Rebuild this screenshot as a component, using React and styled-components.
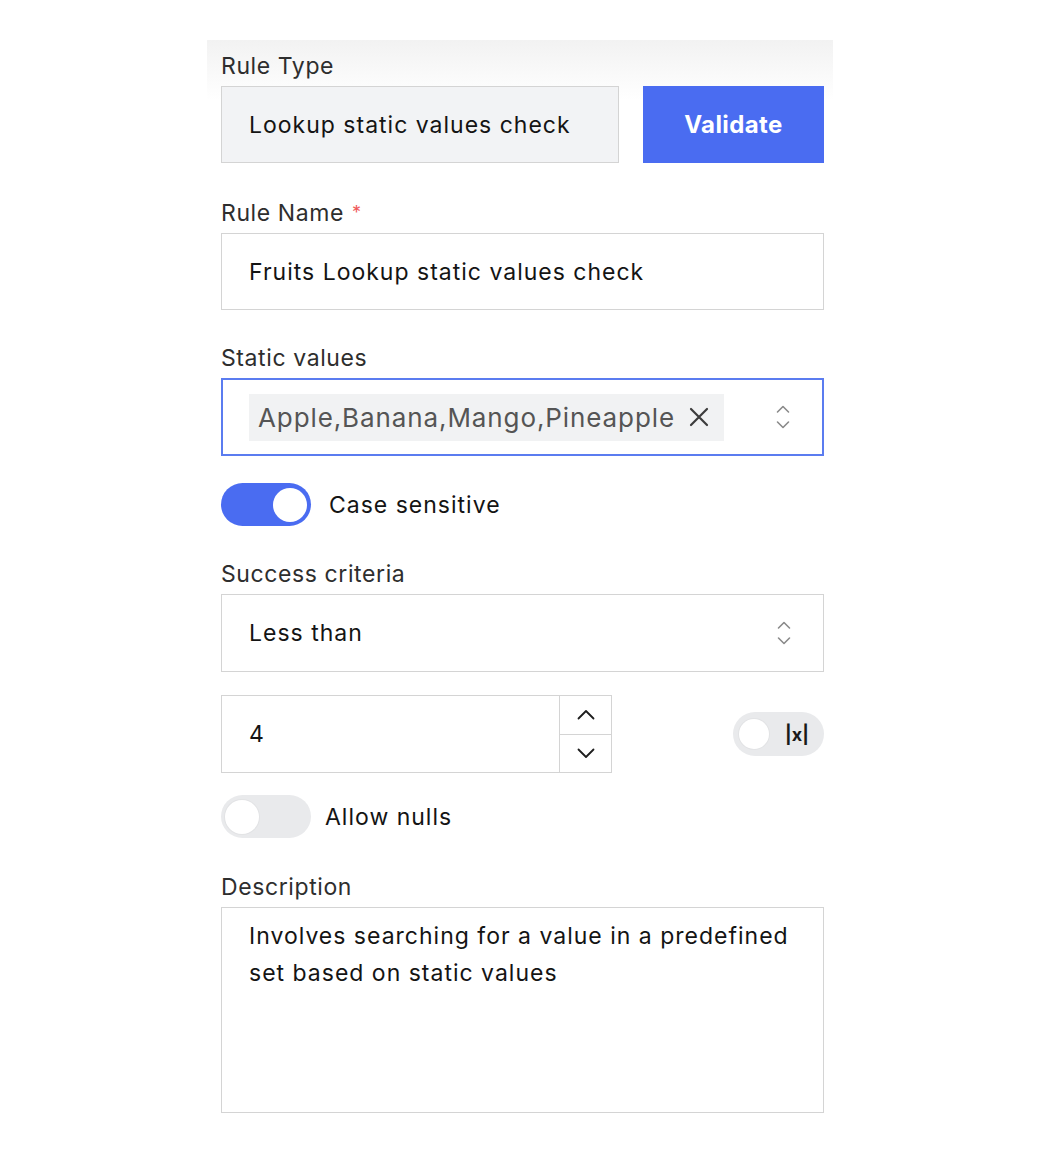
import React from 'react'
import styled, { createGlobalStyle } from 'styled-components'

const GlobalStyle = createGlobalStyle`
  body {
    margin: 0;
    background: #ffffff;
    font-family: Inter, "Open Sans", sans-serif;
    color: #1b1b1b;
  }
`;

// Styled components
const Page = styled.div`
  width: 1040px;
  height: 1160px;
  padding-top: 40px;
  box-sizing: border-box;
`;

const Panel = styled.div`
  margin-left: 207px;
  width: 626px;
  padding: 12px 9px 0 14px;
  box-sizing: border-box;
  background: linear-gradient(#f2f2f2 0px, #ffffff 60px);
  display: flex;
  flex-direction: column;
`;

const Field = styled.div`
  display: flex;
  flex-direction: column;
  margin-top: ${props => props.$mt || 0}px;
`;

const Label = styled.div`
  font-size: 23px;
  line-height: 28px;
  margin-bottom: 6px;
  color: #2e2e2e;
  letter-spacing: 0.6px;

  & > span {
    color: #f05a5a;
    font-size: 18px;
    vertical-align: top;
    margin-left: 8px;
  }
`;

const Row = styled.div`
  display: flex;
  align-items: center;
  justify-content: space-between;
  margin-top: ${props => props.$mt || 0}px;
`;

const Box = styled.div`
  height: ${props => props.$h || 77}px;
  box-sizing: border-box;
  border: ${props => props.$focus ? '2px solid #5b7cf0' : '1.5px solid #d4d4d4'};
  background: ${props => props.$muted ? '#f2f3f5' : '#ffffff'};
  display: flex;
  align-items: center;
  padding: 0 32px 0 27px;
  font-size: 23px;
  color: #141414;
  width: ${props => props.$width ? `${props.$width}px` : '100%'};
  letter-spacing: 1px;
`;

const BoxText = styled.div`
  flex: 1;
`;

const ValidateButton = styled.button`
  width: 181px;
  height: 77px;
  border: none;
  background: #4a6cf1;
  color: #ffffff;
  font-family: Inter, sans-serif;
  font-size: 24px;
  font-weight: 700;
  letter-spacing: 0.4px;
  padding: 0;
`;

const Chip = styled.div`
  height: 47px;
  display: flex;
  align-items: center;
  gap: 14px;
  padding: 0 15px 0 9px;
  margin-left: -1px;
  background: #f1f2f3;
  color: #555555;
  font-size: 26px;
  letter-spacing: 0.9px;
`;

const Spacer = styled.div`
  flex: 1;
`;

const ToggleRow = styled.div`
  display: flex;
  align-items: center;
  gap: ${props => props.$gap || 18}px;
  margin-top: ${props => props.$mt || 0}px;
  font-size: 23px;
  letter-spacing: 1px;
  color: #141414;
`;

const Track = styled.div`
  width: ${props => props.$w || 90}px;
  height: ${props => props.$h || 43}px;
  border-radius: 999px;
  background: ${props => props.$on ? '#4a6cf1' : '#e9eaec'};
  display: flex;
  align-items: center;
  justify-content: ${props => props.$on ? 'flex-end' : 'flex-start'};
  padding: 0 4px;
  box-sizing: border-box;
  flex-shrink: 0;
`;

const Knob = styled.div`
  width: ${props => props.$size || 34}px;
  height: ${props => props.$size || 34}px;
  border-radius: 50%;
  background: #ffffff;
  box-shadow: ${props => props.$on ? 'none' : '0 0 0 1px #e2e3e5'};
`;

const AbsToggle = styled(Track)`
  padding: 0 6px;
  gap: 16px;
`;

const AbsLabel = styled.span`
  font-size: 18px;
  font-weight: 700;
  color: #1a1a1a;
`;

const NumberBox = styled.div`
  width: 391px;
  height: 78px;
  box-sizing: border-box;
  border: 1.5px solid #d4d4d4;
  display: flex;
`;

const NumberValue = styled.div`
  flex: 1;
  display: flex;
  align-items: center;
  padding-left: 27px;
  font-size: 23px;
  color: #141414;
`;

const Stepper = styled.div`
  width: 51px;
  border-left: 1.5px solid #d4d4d4;
  display: flex;
  flex-direction: column;
`;

const StepButton = styled.div`
  flex: 1;
  display: flex;
  align-items: center;
  justify-content: center;
  & + & {
    border-top: 1.5px solid #d4d4d4;
  }
`;

const TextArea = styled.div`
  height: 206px;
  box-sizing: border-box;
  border: 1.5px solid #d4d4d4;
  padding: 10px 20px 0 27px;
  font-size: 23px;
  line-height: 37px;
  color: #141414;
  letter-spacing: 1px;
`;

// Icons
const UpDown = () => (
  <svg width="14" height="28" viewBox="0 0 14 28" fill="none" stroke="#8a8a8a" strokeWidth="1.6" strokeLinecap="round" strokeLinejoin="round">
    <path d="M1.5 9 L7 3.5 L12.5 9" />
    <path d="M1.5 19 L7 24.5 L12.5 19" />
  </svg>
);

const CloseIcon = () => (
  <svg width="20" height="20" viewBox="0 0 20 20" fill="none" stroke="#3c3c3c" strokeWidth="2.2" strokeLinecap="round">
    <path d="M2 2 L18 18 M18 2 L2 18" />
  </svg>
);

const Chevron = ({ up }) => (
  <svg width="18" height="11" viewBox="0 0 18 11" fill="none" stroke="#1e1e1e" strokeWidth="1.8" strokeLinecap="round" strokeLinejoin="round">
    <path d={up ? 'M1.5 9.5 L9 2 L16.5 9.5' : 'M1.5 1.5 L9 9 L16.5 1.5'} />
  </svg>
);

// Main component
const App = () => {
  return (
    <Page>
      <GlobalStyle />
      <Panel>
        <Field>
          <Label>Rule Type</Label>
          <Row>
            <Box $muted $width={398}>
              <BoxText>Lookup static values check</BoxText>
            </Box>
            <ValidateButton>Validate</ValidateButton>
          </Row>
        </Field>

        <Field $mt={36}>
          <Label>Rule Name<span>*</span></Label>
          <Box>
            <BoxText>Fruits Lookup static values check</BoxText>
          </Box>
        </Field>

        <Field $mt={34}>
          <Label>Static values</Label>
          <Box $focus $h={78}>
            <Chip>
              Apple,Banana,Mango,Pineapple
              <CloseIcon />
            </Chip>
            <Spacer />
            <UpDown />
          </Box>
        </Field>

        <ToggleRow $mt={27}>
          <Track $on>
            <Knob $on />
          </Track>
          Case sensitive
        </ToggleRow>

        <Field $mt={34}>
          <Label>Success criteria</Label>
          <Box $h={78}>
            <BoxText>Less than</BoxText>
            <UpDown />
          </Box>
        </Field>

        <Row $mt={23}>
          <NumberBox>
            <NumberValue>4</NumberValue>
            <Stepper>
              <StepButton><Chevron up /></StepButton>
              <StepButton><Chevron /></StepButton>
            </Stepper>
          </NumberBox>
          <AbsToggle $w={91} $h={44}>
            <Knob $size={30} />
            <AbsLabel>|x|</AbsLabel>
          </AbsToggle>
        </Row>

        <ToggleRow $mt={22} $gap={14}>
          <Track>
            <Knob />
          </Track>
          Allow nulls
        </ToggleRow>

        <Field $mt={35}>
          <Label>Description</Label>
          <TextArea>
            Involves searching for a value in a predefined set based on static values
          </TextArea>
        </Field>
      </Panel>
    </Page>
  );
};

export default App;
